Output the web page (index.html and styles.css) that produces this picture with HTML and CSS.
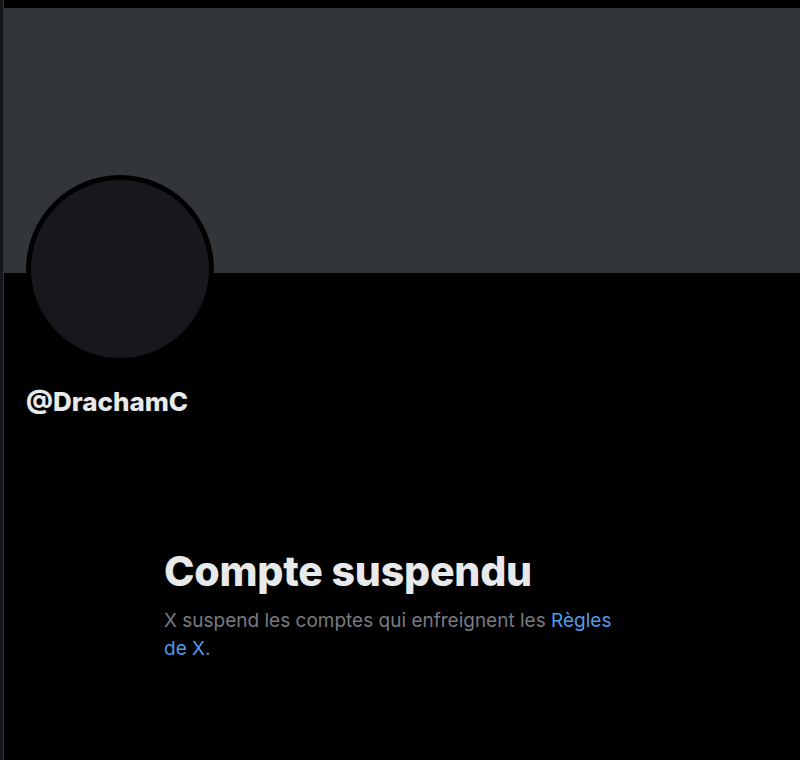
FILE: index.html
```html
<!DOCTYPE html>
<html lang="fr">
<head>
<meta charset="utf-8">
<title>@DrachamC</title>
<link rel="stylesheet" href="styles.css">
</head>
<body>
<div class="frame">
  <div class="column">
    <div class="banner"></div>
    <div class="avatar"></div>
    <div class="handle">@DrachamC</div>
    <section class="notice">
      <h1 class="notice-title">Compte suspendu</h1>
      <p class="notice-text">X suspend les comptes qui enfreignent les <a class="notice-link" href="#">Règles de X</a>.</p>
    </section>
  </div>
</div>
</body>
</html>
```

FILE: styles.css
```css
* { box-sizing: border-box; }
html, body {
  margin: 0;
  height: 100%;
  background: #000;
}
body {
  font-family: Inter, "Noto Sans", "Liberation Sans", sans-serif;
  color: #e7e9ea;
}
.frame {
  min-height: 760px;
  border-left: 3px solid #16171a;
}
.column {
  min-height: 760px;
  border-left: 1px solid #2f3336;
  padding-top: 8px;
}
.banner {
  height: 265px;
  background: #333639;
}
.avatar {
  width: 188px;
  height: 188px;
  margin-top: -98px;
  margin-left: 22px;
  border-radius: 50%;
  border: 5px solid #000;
  background: #16181c;
}
.handle {
  margin: 23px 0 0 22px;
  font-size: 26px;
  line-height: 32px;
  font-weight: 800;
  letter-spacing: 0;
}
.notice {
  margin: 129px 0 0 160px;
  max-width: 470px;
}
.notice-title {
  margin: 0;
  font-size: 41px;
  line-height: 48px;
  font-weight: 800;
  letter-spacing: -0.2px;
}
.notice-text {
  margin: 12px 0 0;
  font-size: 19px;
  line-height: 28px;
  color: #777b80;
}
.notice-link {
  color: #4f9be8;
  text-decoration: none;
}
```
